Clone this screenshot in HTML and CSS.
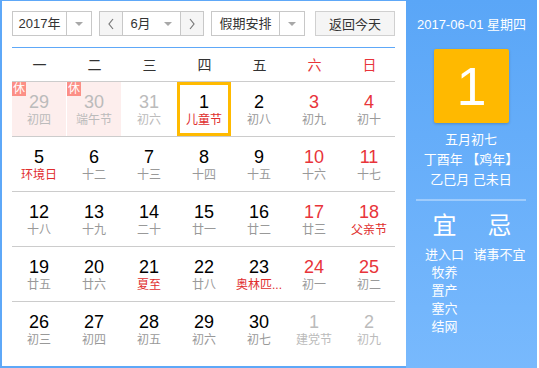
FILE: index.html
```html
<!DOCTYPE html>
<html lang="zh-CN">
<head>
  <meta charset="UTF-8" />
  <title>万年历</title>
  <link rel="stylesheet" href="styles.css">
</head>
<body>
  <div class="calendar">
    <div class="main">
      <div class="toolbar">
        <div class="select year">
          <span class="label">2017年</span>
          <span class="drop"><i class="tri"></i></span>
        </div>
        <div class="select month">
          <span class="step">
            <svg width="8" height="12" viewBox="0 0 8 12"><polyline points="6,1 2,6 6,11" fill="none" stroke="#777" stroke-width="1.2"/></svg>
          </span>
          <span class="label">6月</span>
          <span class="drop-in"><i class="tri"></i></span>
          <span class="step">
            <svg width="8" height="12" viewBox="0 0 8 12"><polyline points="2,1 6,6 2,11" fill="none" stroke="#777" stroke-width="1.2"/></svg>
          </span>
        </div>
        <div class="select holiday">
          <span class="label">假期安排</span>
          <span class="drop"><i class="tri"></i></span>
        </div>
        <button class="today-btn">返回今天</button>
      </div>

      <div class="weekdays">
        <span>一</span><span>二</span><span>三</span><span>四</span><span>五</span>
        <span class="red">六</span><span class="red">日</span>
      </div>

      <div class="week">
        <div class="day other rest"><em>休</em><b>29</b><small>初四</small></div>
        <div class="day other rest"><em>休</em><b>30</b><small>端午节</small></div>
        <div class="day other"><b>31</b><small>初六</small></div>
        <div class="day today"><b>1</b><small class="fest">儿童节</small></div>
        <div class="day"><b>2</b><small>初八</small></div>
        <div class="day"><b class="red">3</b><small>初九</small></div>
        <div class="day"><b class="red">4</b><small>初十</small></div>
      </div>
      <div class="week">
        <div class="day"><b>5</b><small class="fest">环境日</small></div>
        <div class="day"><b>6</b><small>十二</small></div>
        <div class="day"><b>7</b><small>十三</small></div>
        <div class="day"><b>8</b><small>十四</small></div>
        <div class="day"><b>9</b><small>十五</small></div>
        <div class="day"><b class="red">10</b><small>十六</small></div>
        <div class="day"><b class="red">11</b><small>十七</small></div>
      </div>
      <div class="week">
        <div class="day"><b>12</b><small>十八</small></div>
        <div class="day"><b>13</b><small>十九</small></div>
        <div class="day"><b>14</b><small>二十</small></div>
        <div class="day"><b>15</b><small>廿一</small></div>
        <div class="day"><b>16</b><small>廿二</small></div>
        <div class="day"><b class="red">17</b><small>廿三</small></div>
        <div class="day"><b class="red">18</b><small class="fest">父亲节</small></div>
      </div>
      <div class="week">
        <div class="day"><b>19</b><small>廿五</small></div>
        <div class="day"><b>20</b><small>廿六</small></div>
        <div class="day"><b>21</b><small class="fest">夏至</small></div>
        <div class="day"><b>22</b><small>廿八</small></div>
        <div class="day"><b>23</b><small class="fest">奥林匹...</small></div>
        <div class="day"><b class="red">24</b><small>初一</small></div>
        <div class="day"><b class="red">25</b><small>初二</small></div>
      </div>
      <div class="week last">
        <div class="day"><b>26</b><small>初三</small></div>
        <div class="day"><b>27</b><small>初四</small></div>
        <div class="day"><b>28</b><small>初五</small></div>
        <div class="day"><b>29</b><small>初六</small></div>
        <div class="day"><b>30</b><small>初七</small></div>
        <div class="day other"><b>1</b><small>建党节</small></div>
        <div class="day other"><b>2</b><small>初九</small></div>
      </div>
    </div>

    <div class="side">
      <div class="side-date">2017-06-01 星期四</div>
      <div class="big-day">1</div>
      <div class="lunar-info">
        <p>五月初七</p>
        <p>丁酉年 【鸡年】</p>
        <p>乙巳月 己未日</p>
      </div>
      <div class="almanac">
        <div class="col">
          <h3>宜</h3>
          <p>进入口</p>
          <p>牧养</p>
          <p>置产</p>
          <p>塞穴</p>
          <p>结网</p>
        </div>
        <div class="col">
          <h3>忌</h3>
          <p>诸事不宜</p>
        </div>
      </div>
    </div>
  </div>
</body>
</html>
```

FILE: styles.css
```css
body {
  margin: 0;
  font-family: "Liberation Sans", Arial, "Noto Sans CJK SC", sans-serif;
  background: #fff;
}
.calendar {
  display: flex;
  width: 539px;
  height: 368px;
}
.main {
  width: 406px;
  box-sizing: border-box;
  padding: 10px 11px 0 10px;
  border: 2px solid #5ea8f8;
  border-top-width: 1px;
  border-right: 0;
}

/* toolbar */
.toolbar {
  display: flex;
  align-items: center;
  padding-bottom: 11px;
  border-bottom: 1px solid #5ea8f8;
}
.select {
  display: flex;
  height: 25px;
  box-sizing: border-box;
  border: 1px solid #c8c8c8;
  font-size: 13px;
  color: #333;
  line-height: 23px;
  margin-right: 7px;
}
.select .label {
  text-align: center;
}
.year .label { width: 53px; }
.holiday .label { width: 67px; }
.select .drop {
  width: 24px;
  border-left: 1px solid #c8c8c8;
  display: flex;
  align-items: center;
  justify-content: center;
}
.tri {
  width: 0;
  height: 0;
  border-left: 4px solid transparent;
  border-right: 4px solid transparent;
  border-top: 4px solid #a8a8a8;
}
.month .step {
  width: 22px;
  background: #f5f5f5;
  display: flex;
  align-items: center;
  justify-content: center;
}
.month .step:first-child { border-right: 1px solid #c8c8c8; }
.month .step:last-child { border-left: 1px solid #c8c8c8; }
.month .label {
  width: 29px;
  padding-left: 3px;
}
.month .drop-in {
  width: 25px;
  display: flex;
  align-items: center;
  justify-content: center;
}
.today-btn {
  margin-left: 3px;
  width: 81px;
  height: 25px;
  border: 1px solid #d0d0d0;
  background: #f5f5f5;
  font-family: inherit;
  font-size: 13px;
  color: #333;
  padding: 0;
}

/* grid */
.weekdays,
.week {
  display: grid;
  grid-template-columns: repeat(7, 55px);
  border-bottom: 1px solid #ccc;
}
.weekdays span {
  height: 33px;
  line-height: 35px;
  text-align: center;
  font-size: 14px;
  color: #333;
}
.red { color: #e8343a; }
.weekdays span.red { color: #e8343a; }
.week.last { border-bottom: 0; }
.day {
  position: relative;
  height: 54px;
  margin-right: 1px;
  text-align: center;
  box-sizing: border-box;
  padding-top: 10px;
}
.day b {
  display: block;
  font-weight: normal;
  font-size: 18px;
  line-height: 20px;
  color: #000;
}
.day b.red { color: #e8343a; }
.day small {
  display: block;
  font-size: 12px;
  line-height: 16px;
  color: #999;
  white-space: nowrap;
}
.day small.fest { color: #e02d2d; }
.day.other b,
.day.other small { color: #bbb; }
.day.rest { background: #fdeeed; }
.day em {
  position: absolute;
  left: 0;
  top: 0;
  width: 14px;
  height: 14px;
  background: #fc8f86;
  color: #fff;
  font-style: normal;
  font-size: 12px;
  line-height: 14px;
  text-align: center;
}
.day.today { box-shadow: inset 0 0 0 3px #ffba00; }

/* side panel */
.side {
  width: 131px;
  background: linear-gradient(#5aa6f7, #78b9fd);
  color: #fff;
  text-align: center;
  padding-top: 17px;
  box-sizing: border-box;
}
.side-date {
  font-size: 13px;
  line-height: 16px;
}
.big-day {
  width: 75px;
  height: 74px;
  margin: 16px auto 0;
  background: #ffb900;
  border-radius: 2px;
  box-shadow: 0 1px 3px rgba(0, 0, 0, 0.2);
  font-size: 54px;
  line-height: 74px;
}
.lunar-info {
  margin-top: 7px;
  padding-bottom: 9px;
  border-bottom: 2px solid rgba(255, 255, 255, 0.35);
  margin-left: 10px;
  margin-right: 11px;
}
.lunar-info p {
  margin: 0;
  font-size: 13px;
  line-height: 20px;
  white-space: nowrap;
}
.almanac {
  display: flex;
  justify-content: center;
  margin-top: 10px;
  padding-left: 1px;
}
.almanac .col {
  width: 55px;
}
.almanac h3 {
  margin: 0 0 5px;
  font-weight: normal;
  font-size: 24px;
  line-height: 30px;
}
.almanac p {
  margin: 0;
  font-size: 13px;
  line-height: 18px;
  white-space: nowrap;
}
```
